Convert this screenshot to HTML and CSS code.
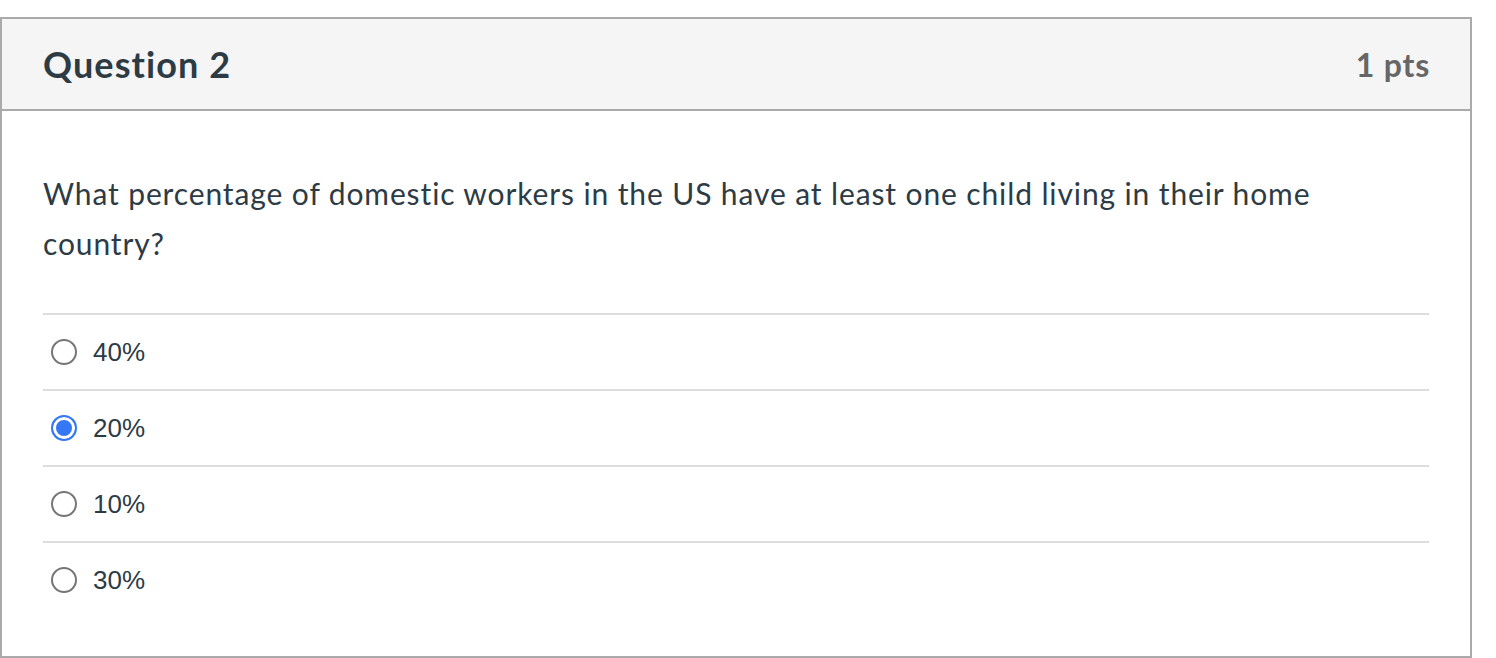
FILE: index.html
```html
<!DOCTYPE html>
<html lang="en">
<head>
<meta charset="utf-8">
<title>Question 2</title>
<link rel="stylesheet" href="styles.css">
</head>
<body>
<div class="question">
  <div class="header">
    <span class="name">Question 2</span>
    <span class="points">1 pts</span>
  </div>
  <div class="content">
    <div class="text">What percentage of domestic workers in the US have at least one child living in their home country?</div>
    <div class="answers">
      <label class="answer"><span class="radio"></span><span class="label">40%</span></label>
      <label class="answer"><span class="radio checked"></span><span class="label">20%</span></label>
      <label class="answer"><span class="radio"></span><span class="label">10%</span></label>
      <label class="answer"><span class="radio"></span><span class="label">30%</span></label>
    </div>
  </div>
</div>
</body>
</html>
```
FILE: styles.css
```css
html, body {
  margin: 0;
  padding: 0;
  background: #fff;
}
body {
  padding-top: 17px;
  font-family: Lato, "Liberation Sans", sans-serif;
  color: #2d3b45;
}
.question {
  width: 1472px;
  box-sizing: border-box;
  border: 2px solid #aaa;
  height: 641px;
}
.header {
  display: flex;
  justify-content: space-between;
  align-items: center;
  height: 90px;
  background: #f5f5f5;
  border-bottom: 2px solid #aaa;
  padding: 0 40px 0 41px;
}
.name {
  font-size: 36px;
  font-weight: 700;
  letter-spacing: 1.1px;
  color: #2d3b45;
}
.points {
  font-size: 32px;
  font-weight: 700;
  letter-spacing: 0.8px;
  color: #666;
}
.content {
  padding: 57px 41px 0 41px;
}
.text {
  font-size: 30px;
  line-height: 50px;
  letter-spacing: 0.88px;
}
.answers {
  margin-top: 45px;
}
.answer {
  display: flex;
  align-items: center;
  height: 74px;
  border-top: 2px solid #ddd;
  font-family: "Liberation Sans", Arial, sans-serif;
  font-size: 26px;
}
.radio {
  box-sizing: border-box;
  width: 26px;
  height: 26px;
  border: 2px solid #767676;
  border-radius: 50%;
  margin-left: 8px;
  margin-right: 16px;
  background: #fff;
}
.radio.checked {
  border: 2px solid #3478f6;
  background: #3478f6;
  box-shadow: inset 0 0 0 3px #fff;
}
.label {
  color: #2d3b45;
}
```
